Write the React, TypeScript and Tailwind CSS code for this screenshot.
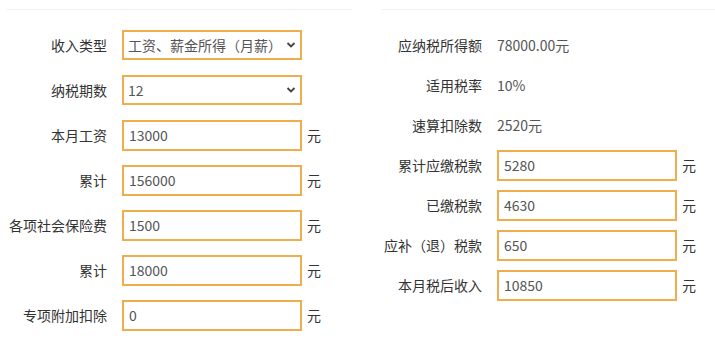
import React from 'react';

const FONT = { fontFamily: '"Noto Sans CJK SC", "Noto Sans", sans-serif' };

const leftRows = [
  { label: '本月工资', value: '13000' },
  { label: '累计', value: '156000' },
  { label: '各项社会保险费', value: '1500' },
  { label: '累计', value: '18000' },
  { label: '专项附加扣除', value: '0' },
];

const rightText = [
  { label: '应纳税所得额', value: '78000.00元' },
  { label: '适用税率', value: '10%' },
  { label: '速算扣除数', value: '2520元' },
];

const rightInputs = [
  { label: '累计应缴税款', value: '5280' },
  { label: '已缴税款', value: '4630' },
  { label: '应补（退）税款', value: '650' },
  { label: '本月税后收入', value: '10850' },
];

const Chevron = () => (
  <svg width="10" height="7" viewBox="0 0 10 7" className="absolute right-[6px] top-1/2 -translate-y-1/2 pointer-events-none">
    <path d="M1.5 1.5 L5 5 L8.5 1.5" fill="none" stroke="#444" strokeWidth="1.8" />
  </svg>
);

const SelectBox: React.FC<{ value: string; options: string[] }> = ({ value, options }) => (
  <div className="relative w-[180px] h-[30px]">
    <select
      defaultValue={value}
      className="appearance-none w-full h-full border-2 border-[#f0ad4e] bg-white pl-[4px] pr-6 text-[14px] text-[#555] outline-none rounded-none"
      style={FONT}
    >
      {options.map((o) => (
        <option key={o}>{o}</option>
      ))}
    </select>
    <Chevron />
  </div>
);

const InputBox: React.FC<{ value: string }> = ({ value }) => (
  <input
    defaultValue={value}
    className="w-[180px] h-[31px] border-2 border-[#f0ad4e] bg-white px-[5px] text-[14px] text-[#555] outline-none"
    style={FONT}
  />
);

export default function App() {
  return (
    <div className="w-[715px] h-[343px] bg-white overflow-hidden flex gap-[30px] pl-[7px]" style={FONT}>
      {/* Left: inputs */}
      <div className="w-[345px] shrink-0">
        <div className="h-px bg-[#f0f0f0] mt-[9px]" />
        <div className="flex flex-col gap-[15px] pt-[20px]">
          <div className="flex items-center h-[30px]">
            <span className="w-[100px] text-right text-[14px] text-[#333]">收入类型</span>
            <div className="ml-[15px]">
              <SelectBox value="工资、薪金所得（月薪）" options={['工资、薪金所得（月薪）', '年终奖']} />
            </div>
          </div>
          <div className="flex items-center h-[30px]">
            <span className="w-[100px] text-right text-[14px] text-[#333]">纳税期数</span>
            <div className="ml-[15px]">
              <SelectBox value="12" options={['1', '2', '3', '4', '5', '6', '7', '8', '9', '10', '11', '12']} />
            </div>
          </div>
          {leftRows.map((r, i) => (
            <div key={i} className="flex items-center h-[30px]">
              <span className="w-[100px] text-right text-[14px] text-[#333] whitespace-nowrap">{r.label}</span>
              <div className="ml-[15px]">
                <InputBox value={r.value} />
              </div>
              <span className="ml-[5px] text-[14px] text-[#333]">元</span>
            </div>
          ))}
        </div>
      </div>

      {/* Right: results */}
      <div className="flex-1">
        <div className="h-px bg-[#f0f0f0] mt-[9px]" />
        <div className="flex flex-col gap-[10px] pt-[20px]">
          {rightText.map((r, i) => (
            <div key={i} className="flex items-center h-[30px]">
              <span className="w-[100px] text-right text-[14px] text-[#333]">{r.label}</span>
              <span className="ml-[15px] text-[14px] text-[#555]">{r.value}</span>
            </div>
          ))}
          {rightInputs.map((r, i) => (
            <div key={i} className="flex items-center h-[30px]">
              <span className="w-[100px] text-right text-[14px] text-[#333] whitespace-nowrap">{r.label}</span>
              <div className="ml-[15px]">
                <InputBox value={r.value} />
              </div>
              <span className="ml-[5px] text-[14px] text-[#333]">元</span>
            </div>
          ))}
        </div>
      </div>
    </div>
  );
}
